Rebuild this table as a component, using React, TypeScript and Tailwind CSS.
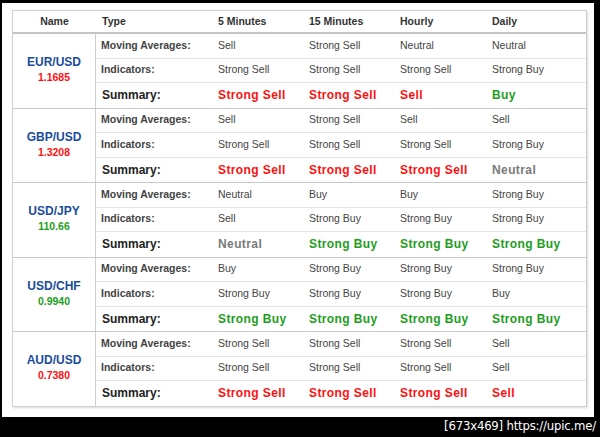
const blocks = [
  {
    pair: "EUR/USD",
    price: "1.1685",
    up: false,
    ma: ["Sell", "Strong Sell", "Neutral", "Neutral"],
    ind: ["Strong Sell", "Strong Sell", "Strong Sell", "Strong Buy"],
    sum: ["Strong Sell", "Strong Sell", "Sell", "Buy"],
  },
  {
    pair: "GBP/USD",
    price: "1.3208",
    up: false,
    ma: ["Sell", "Strong Sell", "Sell", "Sell"],
    ind: ["Strong Sell", "Strong Sell", "Strong Sell", "Strong Buy"],
    sum: ["Strong Sell", "Strong Sell", "Strong Sell", "Neutral"],
  },
  {
    pair: "USD/JPY",
    price: "110.66",
    up: true,
    ma: ["Neutral", "Buy", "Buy", "Strong Buy"],
    ind: ["Sell", "Strong Buy", "Strong Buy", "Strong Buy"],
    sum: ["Neutral", "Strong Buy", "Strong Buy", "Strong Buy"],
  },
  {
    pair: "USD/CHF",
    price: "0.9940",
    up: true,
    ma: ["Buy", "Strong Buy", "Strong Buy", "Strong Buy"],
    ind: ["Strong Buy", "Strong Buy", "Strong Buy", "Buy"],
    sum: ["Strong Buy", "Strong Buy", "Strong Buy", "Strong Buy"],
  },
  {
    pair: "AUD/USD",
    price: "0.7380",
    up: false,
    ma: ["Strong Sell", "Strong Sell", "Strong Sell", "Sell"],
    ind: ["Strong Sell", "Strong Sell", "Strong Sell", "Sell"],
    sum: ["Strong Sell", "Strong Sell", "Strong Sell", "Sell"],
  },
];

const cols = "grid grid-cols-[117px_91px_91px_92px_99px]";

function sumColor(v: string) {
  if (v.includes("Sell")) return "text-[#ff1010]";
  if (v.includes("Buy")) return "text-[#1d9e1d]";
  return "text-[#7a7a7a]";
}

function Row({ label, values, summary }: { label: string; values: string[]; summary?: boolean }) {
  return (
    <div className={`${cols} h-[24.5px] items-center ${summary ? "" : "border-b border-[#e4e4e4]"}`}>
      {summary ? (
        <span className="pl-[6px] text-[12px] font-bold text-[#222]">{label}</span>
      ) : (
        <span className="pl-[5px] text-[10.5px] font-bold text-[#444]">{label}</span>
      )}
      {values.map((v, i) =>
        summary ? (
          <span key={i} className={`pl-[5px] text-[12px] font-bold tracking-[0.4px] ${sumColor(v)}`}>
            {v}
          </span>
        ) : (
          <span key={i} className="pl-[5px] text-[10.5px] text-[#444]">
            {v}
          </span>
        )
      )}
    </div>
  );
}

export default function App() {
  return (
    <div className="w-[600px] h-[437px] bg-black relative font-['Liberation_Sans',Arial,sans-serif]">
      <div className="absolute left-[2px] top-[3px] w-[592px] h-[414px] bg-white">
        <div className="ml-[10px] mt-[7px] w-[575px] border border-[#cfcfcf] shadow-[1px_1px_2px_rgba(0,0,0,0.15)]">
          {/* header */}
          <div className="flex h-[23px] items-center border-b-2 border-[#c4c4c4]">
            <div className="w-[84px] text-center text-[10.5px] font-bold text-[#333]">Name</div>
            <div className={`${cols} text-[10.5px] font-bold text-[#333]`}>
              <span className="pl-[6px]">Type</span>
              <span className="pl-[5px]">5 Minutes</span>
              <span className="pl-[5px]">15 Minutes</span>
              <span className="pl-[5px]">Hourly</span>
              <span className="pl-[5px]">Daily</span>
            </div>
          </div>
          {blocks.map((b, i) => (
            <div
              key={b.pair}
              className={`flex ${i < blocks.length - 1 ? "border-b border-[#c8c8c8]" : ""}`}
            >
              <div className="w-[84px] border-r border-[#cfcfcf] flex flex-col items-center justify-center pb-[2px]">
                <span className="text-[12px] font-bold text-[#1b4c9c] leading-[15px]">{b.pair}</span>
                <span
                  className={`text-[10.5px] font-bold leading-[14px] ${
                    b.up ? "text-[#1d9e1d]" : "text-[#ff1010]"
                  }`}
                >
                  {b.price}
                </span>
              </div>
              <div className="flex flex-col">
                <Row label="Moving Averages:" values={b.ma} />
                <Row label="Indicators:" values={b.ind} />
                <Row label="Summary:" values={b.sum} summary />
              </div>
            </div>
          ))}
        </div>
      </div>
      <div className="absolute right-[4px] bottom-[2px] text-white text-[13px] font-['DejaVu_Sans_Condensed','DejaVu_Sans',sans-serif] tracking-[-0.2px]">
        [673x469] https://upic.me/
      </div>
    </div>
  );
}
